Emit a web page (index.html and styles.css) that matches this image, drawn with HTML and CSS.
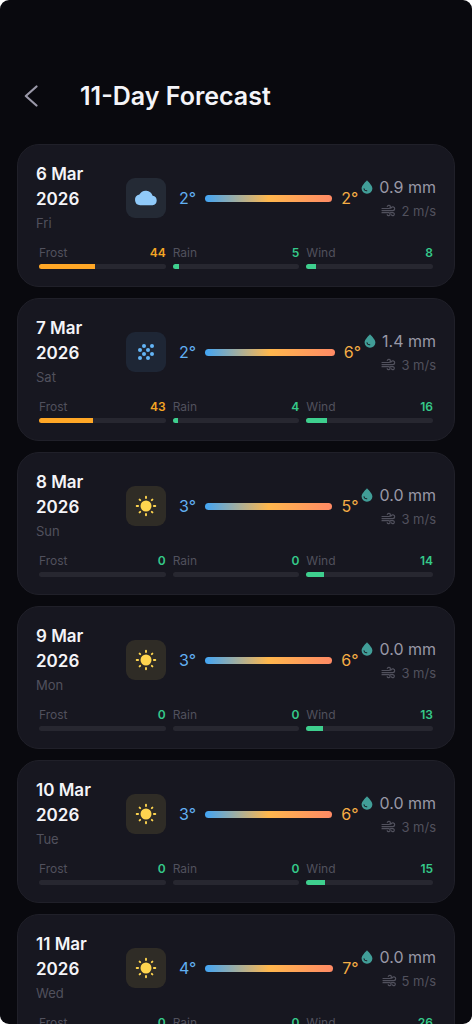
FILE: index.html
```html
<!DOCTYPE html>
<html lang="en">
<head>
<meta charset="utf-8">
<meta name="viewport" content="width=device-width, initial-scale=1">
<title>11-Day Forecast</title>
<link rel="stylesheet" href="styles.css">
</head>
<body>
<svg class="sprite" aria-hidden="true">
  <symbol id="back" viewBox="0 0 14 22"><path d="M12.500 1.500 1.800 11l10.700 9.500" fill="none" stroke="currentColor" stroke-width="2.200" stroke-linecap="round" stroke-linejoin="round"/></symbol>
  <symbol id="cloud" viewBox="0 0 24 24"><path d="M6.200 19.300a5.400 5.400 0 0 1-.8-10.700A7.200 7.200 0 0 1 18.600 9.700 4.850 4.850 0 0 1 18.500 19.300Z" fill="currentColor"/></symbol>
  <symbol id="grain" viewBox="0 0 24 24"><g fill="currentColor"><circle cx="10" cy="6" r="2"/><circle cx="18" cy="6" r="2"/><circle cx="6" cy="10" r="2"/><circle cx="14" cy="10" r="2"/><circle cx="10" cy="14" r="2"/><circle cx="18" cy="14" r="2"/><circle cx="6" cy="18" r="2"/><circle cx="14" cy="18" r="2"/></g></symbol>
  <symbol id="sun" viewBox="0 0 24 24"><circle cx="12" cy="12" r="5.500" fill="currentColor"/><path d="M12 2.700v1.400M12 19.900v1.400M2.700 12h1.400M19.900 12h1.400M5.600 5.600l.6.6M17.800 17.800l.6.6M5.600 18.400l.6-.6M17.800 6.200l.6-.6" stroke="currentColor" stroke-width="1.900" stroke-linecap="round"/></symbol>
  <symbol id="drop" viewBox="0 0 12 14"><path fill="currentColor" fill-rule="evenodd" d="M6 .3C4 2.700.6 5.500.6 8.600a5.400 5.100 0 0 0 10.800 0C11.400 5.500 8 2.700 6 .3ZM2.500 8.800c.3 1.500 1.400 2.600 3.300 2.500.7 0 .7-1.100 0-1.100-1.200.1-2-.4-2.300-1.500-.2-.7-1.100-.6-1 .1Z"/></symbol>
  <symbol id="wind" viewBox="0 0 15 14"><path d="M1 4.500h6.800a1.600 1.600 0 1 0-1.500-2.100M1 6.600h10.800a1.900 1.900 0 1 0-1.800-2.500M1 8.700h6.600a1.500 1.500 0 1 1-1.400 2M9.500 8.700h2.300a1.500 1.500 0 1 1-1.300 2.200" fill="none" stroke="currentColor" stroke-width="1.200" stroke-linecap="round"/></symbol>
</svg>
<header class="topbar">
  <button class="back" type="button" aria-label="Back"><svg><use href="#back"/></svg></button>
  <h1 class="title">11-Day Forecast</h1>
</header>
<main class="days" id="days"></main>
<script src="app.js"></script>
</body>
</html>
```
FILE: app.js
```js
const days = [
  ["6 Mar", "Fri", "cloud", 2, 2, "0.9", 2, 44, 5, 8],
  ["7 Mar", "Sat", "grain", 2, 6, "1.4", 3, 43, 4, 16],
  ["8 Mar", "Sun", "sun", 3, 5, "0.0", 3, 0, 0, 14],
  ["9 Mar", "Mon", "sun", 3, 6, "0.0", 3, 0, 0, 13],
  ["10 Mar", "Tue", "sun", 3, 6, "0.0", 3, 0, 0, 15],
  ["11 Mar", "Wed", "sun", 4, 7, "0.0", 5, 0, 0, 26]
];

const icon = (name) => `<svg class="icon-${name}" aria-hidden="true"><use href="#${name}"/></svg>`;

const risk = (label, value) => `
  <div class="risk ${value >= 40 ? "risk-high" : "risk-low"}">
    <div class="risk-head"><span>${label}</span><b class="risk-value">${value}</b></div>
    <div class="track"><div class="fill" style="width:${value}%"></div></div>
  </div>`;

document.getElementById("days").innerHTML = days.map(([date, weekday, sky, low, high, rain, wind, frostRisk, rainRisk, windRisk]) => `
  <article class="card">
    <div class="summary">
      <div class="when"><h2 class="date">${date}<br>2026</h2><p class="weekday">${weekday}</p></div>
      <div class="tile tile-${sky}">${icon(sky)}</div>
      <div class="range"><span class="low">${low}°</span><span class="range-bar"></span><span class="high">${high}°</span></div>
      <div class="amounts">
        <p class="rain">${icon("drop")}${rain} mm</p>
        <p class="wind">${icon("wind")}${wind} m/s</p>
      </div>
    </div>
    <div class="risks">${risk("Frost", frostRisk)}${risk("Rain", rainRisk)}${risk("Wind", windRisk)}</div>
  </article>`).join("");
```
FILE: styles.css
```css
* { box-sizing: border-box; }
html { background: #fff; }
body {
  margin: 0;
  height: 100vh;
  overflow: clip;
  border-radius: 9px;
  background: #09090e;
  color: #f4f4f8;
  font-family: Inter, "Liberation Sans", sans-serif;
}
h1, h2, p { margin: 0; }
.sprite { display: none; }
svg { flex: none; display: block; }
.topbar {
  display: flex;
  align-items: center;
  gap: 36px;
  padding: 76px 18px 28px;
}
.back {
  width: 26px;
  height: 40px;
  padding: 0 6px;
  border: 0;
  background: none;
  color: #9a98a8;
}
.back svg { width: 14px; height: 22px; }
.title { font-size: 25px; line-height: 40px; font-weight: 600; }
.days { display: flex; flex-direction: column; gap: 11px; padding: 0 17px; }
.card {
  padding: 17px 18px;
  border: 1px solid #202029;
  border-radius: 22px;
  background: #171720;
}
.summary { display: flex; align-items: center; }
.when { width: 90px; flex: none; }
.date { font-size: 17px; line-height: 25px; font-weight: 600; }
.weekday { font-size: 13px; line-height: 22px; color: #51515d; }
.tile {
  display: flex;
  align-items: center;
  justify-content: center;
  flex: none;
  width: 40px;
  height: 40px;
  border-radius: 9px;
}
.tile svg { width: 24px; height: 24px; }
.tile-cloud { background: #242a35; color: #90caf9; }
.tile-grain { background: #1e2635; color: #64b5f6; }
.tile-sun { background: #2f2c26; color: #ffd54f; }
.range {
  display: flex;
  align-items: center;
  flex: 1;
  gap: 9px;
  padding: 0 3px 0 13px;
  font-size: 16px;
  line-height: 24px;
}
.low { color: #62b0f2; }
.high { color: #f5ad45; }
.range-bar {
  flex: 1;
  height: 7px;
  border-radius: 4px;
  background: linear-gradient(90deg, #42a5f5, #ffb74d 50%, #ff8a65);
}
.rain, .wind { display: flex; align-items: center; justify-content: flex-end; }
.rain { gap: 6px; font-size: 16px; line-height: 25px; color: #9998a6; }
.wind { gap: 5px; font-size: 13px; line-height: 22px; color: #51515d; }
.icon-drop { width: 12px; height: 14px; color: #419e98; }
.icon-wind { width: 15px; height: 14px; }
.risks { display: flex; gap: 7px; padding: 10px 3px 0; }
.risk { flex: 1; }
.risk-head {
  display: flex;
  justify-content: space-between;
  margin-bottom: 3px;
  font-size: 12px;
  line-height: 17px;
  color: #51515d;
}
.risk-value { font-weight: 600; }
.track { height: 5px; border-radius: 3px; overflow: hidden; background: #272730; }
.fill { height: 100%; }
.risk-high .risk-value { color: #f5a524; }
.risk-high .fill { background: #ffa726; }
.risk-low .risk-value { color: #35c98a; }
.risk-low .fill { background: #3ecf8e; }
```
